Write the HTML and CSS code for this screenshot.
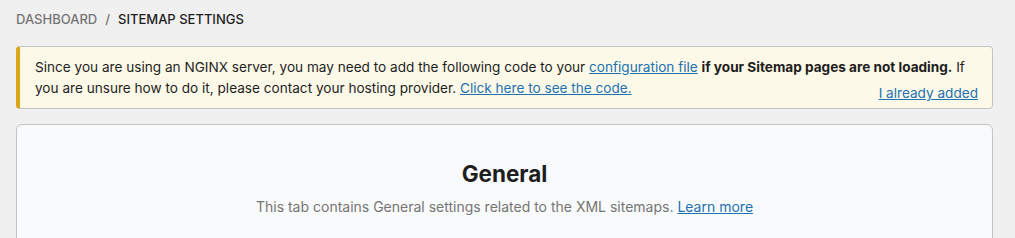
FILE: index.html
```html
<!DOCTYPE html>
<html lang="en">
<head>
<meta charset="utf-8">
<title>Sitemap Settings</title>
<link rel="stylesheet" href="styles.css">
</head>
<body>
<div class="page">
  <nav class="breadcrumb">
    <a class="crumb" href="#">Dashboard</a>
    <span class="sep">/</span>
    <span class="crumb current">Sitemap Settings</span>
  </nav>
  <div class="notice">
    <p class="notice-text">Since you are using an NGINX server, you may need to add the following code to your <a href="#">configuration file</a> <strong>if your Sitemap pages are not loading.</strong> If you are unsure how to do it, please contact your hosting provider. <a href="#">Click here to see the code.</a><a class="dismiss" href="#">I already added</a></p>
  </div>
  <section class="card">
    <h2 class="card-title">General</h2>
    <p class="card-desc">This tab contains General settings related to the XML sitemaps. <a href="#">Learn more</a></p>
  </section>
</div>
</body>
</html>
```
FILE: styles.css
```css
html, body {
  margin: 0;
  padding: 0;
  background: #f0f0f1;
  font-family: Inter, "Noto Sans", sans-serif;
  color: #1e1e1e;
  overflow: hidden;
}
.page {
  padding: 0 22px 0 16px;
}
.breadcrumb {
  display: flex;
  align-items: center;
  gap: 8px;
  height: 38px;
  font-size: 13px;
  font-weight: 500;
  text-transform: uppercase;
}
.breadcrumb .crumb {
  text-decoration: none;
  color: #757575;
}
.breadcrumb .crumb.current {
  color: #1e1e1e;
}
.breadcrumb .sep {
  color: #757575;
}
.notice {
  margin-top: 8px;
  background: #fcf9e8;
  border: 1px solid #c3c4c7;
  border-left: 4px solid #dba617;
  border-radius: 4px;
  padding: 10px 14px 9px 15px;
  font-size: 13.6px;
  line-height: 21px;
  color: #1e1e1e;
}
.notice-text {
  margin: 0;
}
.notice a {
  color: #2271b1;
}
.notice strong {
  font-weight: 700;
}
.dismiss {
  float: right;
  margin-top: 5px;
}
.card {
  margin-top: 15px;
  background: #f9fafb;
  border: 1px solid #c3c4c7;
  border-radius: 6px;
  height: 140px;
  text-align: center;
  padding-top: 34px;
  box-sizing: border-box;
}
.card-title {
  margin: 0;
  font-size: 22.5px;
  line-height: 30px;
  font-weight: 700;
  color: #1e1e1e;
}
.card-desc {
  margin: 7px 0 0;
  font-size: 14px;
  line-height: 21px;
  color: #757575;
}
.card-desc a {
  color: #2271b1;
}
```
